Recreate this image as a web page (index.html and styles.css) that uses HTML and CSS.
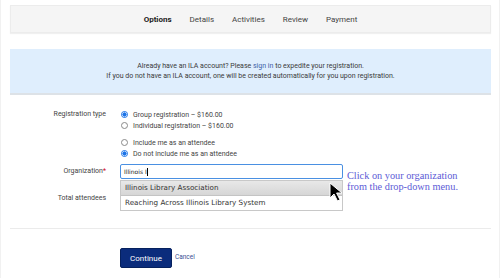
FILE: index.html
```html
<!DOCTYPE html>
<html lang="en">
<head>
    <meta charset="UTF-8">
    <title>Registration Options</title>
    <link rel="stylesheet" href="styles.css">
</head>
<body>
<div class="page">

    <!-- Steps -->
    <nav class="steps">
        <span class="step active">Options</span>
        <span class="step">Details</span>
        <span class="step">Activities</span>
        <span class="step">Review</span>
        <span class="step">Payment</span>
    </nav>

    <!-- Sign-in notice -->
    <div class="notice">
        <p>Already have an ILA account? Please <a href="#">sign in</a> to expedite your registration.</p>
        <p>If you do not have an ILA account, one will be created automatically for you upon registration.</p>
    </div>

    <!-- Form -->
    <form class="reg-form">
        <div class="row">
            <div class="label">Registration type</div>
            <div class="field">
                <div class="radio-group">
                    <label class="radio"><span class="dot checked"></span>Group registration – $160.00</label>
                    <label class="radio"><span class="dot"></span>Individual registration – $160.00</label>
                </div>
                <div class="radio-group">
                    <label class="radio"><span class="dot"></span>Include me as an attendee</label>
                    <label class="radio"><span class="dot checked"></span>Do not include me as an attendee</label>
                </div>
            </div>
        </div>

        <div class="row row-org">
            <div class="label">Organization<span class="req">*</span></div>
            <div class="field org-field">
                <div class="org-input">Illinois I<span class="caret"></span></div>
                <ul class="suggest">
                    <li class="hover">Illinois Library Association</li>
                    <li>Reaching Across Illinois Library System</li>
                </ul>
                <svg class="pointer" width="16" height="20" viewBox="0 0 16 20">
                    <path d="M1 1 L1 16 L5 12 L8.5 19 L11 17.8 L7.6 11 L13 11 Z" fill="#000" stroke="#fff" stroke-width="1"/>
                </svg>
                <div class="hint">Click on your organization<br>from the drop-down menu.</div>
            </div>
        </div>

        <div class="row row-total">
            <div class="label">Total attendees</div>
            <div class="field"></div>
        </div>

        <hr class="sep">

        <div class="actions">
            <button type="button" class="btn-continue">Continue</button>
            <a href="#" class="cancel">Cancel</a>
        </div>
    </form>

</div>
</body>
</html>
```

FILE: styles.css
```css
body {
    margin: 0;
    background: #fff;
    font-family: Roboto, 'Liberation Sans', sans-serif;
    color: #333;
}
.page {
    height: 278px;
    box-sizing: border-box;
    padding: 5px 8px 0 9px;
    border-left: 1px solid #f1f1f1;
    border-right: 1px solid #f1f1f1;
    overflow: hidden;
}

/* --- Steps --- */
.steps {
    height: 26px;
    display: flex;
    justify-content: center;
    align-items: center;
    gap: 18px;
    background: #f5f5f5;
    border: 1px solid #ececec;
    box-shadow: 0 1px 1px rgba(0,0,0,0.06);
    font-size: 8px;
    color: #444;
}
.step.active { font-weight: 700; color: #222; }

/* --- Notice --- */
.notice {
    margin-top: 16px;
    height: 44px;
    background: #dfeefd;
    border-bottom: 2px solid #dde2e7;
    display: flex;
    flex-direction: column;
    justify-content: center;
    text-align: center;
    font-size: 7px;
    line-height: 10px;
    color: #3a3a3a;
}
.notice p { margin: 0; }
.notice a { color: #3d5fa6; text-decoration: none; }

/* --- Form --- */
.reg-form {
    margin-top: 14px;
    font-size: 7px;
    color: #444;
}
.row {
    display: flex;
    gap: 14px;
}
.label {
    width: 96px;
    flex: none;
    text-align: right;
    line-height: 11px;
}
.req { color: #d0021b; }
.field { flex: 1; }
.radio-group { margin-bottom: 6px; }
.radio-group:last-child { margin-bottom: 0; }
.radio {
    display: flex;
    align-items: center;
    height: 11px;
    gap: 5px;
    padding-left: 1px;
}
.dot {
    width: 5px;
    height: 5px;
    border: 1px solid #8a8a8a;
    border-radius: 50%;
    box-sizing: content-box;
}
.dot.checked {
    border-color: #1a73e8;
    background: radial-gradient(circle, #1a73e8 0 55%, #fff 60%);
}

.row-org { margin-top: 5px; }
.row-org .label { line-height: 15px; }
.org-field {
    position: relative;
    max-width: 223px;
}
.org-input {
    height: 15px;
    box-sizing: border-box;
    border: 1px solid #4a90e2;
    border-radius: 2px;
    padding: 0 3px;
    font-family: 'DejaVu Sans', Verdana, sans-serif;
    font-size: 6px;
    line-height: 13px;
    color: #222;
}
.caret {
    display: inline-block;
    width: 1px;
    height: 8px;
    background: #000;
    vertical-align: middle;
}
.suggest {
    position: absolute;
    top: 16px;
    left: 0;
    right: 0;
    margin: 0;
    padding: 0;
    list-style: none;
    background: #fff;
    border: 1px solid #c8c8c8;
    font-family: 'DejaVu Sans', Verdana, sans-serif;
    font-size: 7.2px;
    color: #333;
    z-index: 5;
}
.suggest li {
    height: 14px;
    line-height: 14px;
    padding: 0 4px;
}
.suggest li.hover {
    background: linear-gradient(#e8e8e8, #d6d6d6);
    border-bottom: 1px solid #c4c4c4;
}
.pointer {
    position: absolute;
    left: 209px;
    top: 18px;
    z-index: 6;
}
.hint {
    position: absolute;
    left: 227px;
    top: 6px;
    width: 150px;
    font-family: 'Liberation Serif', 'DejaVu Serif', serif;
    font-size: 10.3px;
    line-height: 11px;
    color: #5d5bd6;
}

.row-total {
    margin-top: 14px;
    height: 15px;
}

.sep {
    margin: 20px 0 0 0;
    border: none;
    border-top: 1px solid #ebebeb;
}

.actions {
    display: flex;
    align-items: center;
    gap: 3px;
    padding-left: 110px;
    margin-top: 19px;
}
.btn-continue {
    width: 52px;
    height: 20px;
    border: 1px solid #06215e;
    border-radius: 2px;
    background: #0b2c7c;
    color: #fff;
    font-family: Roboto, 'Liberation Sans', sans-serif;
    font-size: 8px;
    padding: 0;
}
.cancel {
    color: #3b4f94;
    font-size: 6.5px;
    text-decoration: none;
    margin-top: -3px;
}
```
